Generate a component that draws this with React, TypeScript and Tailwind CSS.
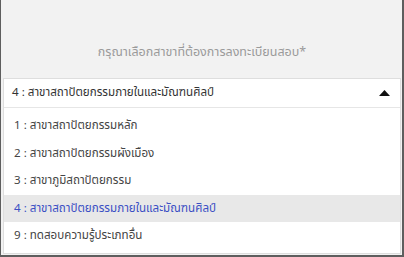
import React from 'react';

const options = [
  { id: 1, label: '1 : สาขาสถาปัตยกรรมหลัก' },
  { id: 2, label: '2 : สาขาสถาปัตยกรรมผังเมือง' },
  { id: 3, label: '3 : สาขาภูมิสถาปัตยกรรม' },
  { id: 4, label: '4 : สาขาสถาปัตยกรรมภายในและมัณฑนศิลป์' },
  { id: 9, label: '9 : ทดสอบความรู้ประเภทอื่น' },
];

const selected = 4;

export default function App() {
  return (
    <div
      className="w-[404px] h-[257px] bg-[#f2f2f2] border-l border-r-2 border-b-2 border-[#5e5e5e] pl-[2px] pr-[1px] overflow-hidden"
      style={{ fontFamily: 'Tahoma, "Noto Sans Thai", "Noto Sans", sans-serif' }}
    >
      <div className="h-[78px] flex items-center justify-center pt-[28px]">
        <p className="text-[12.5px] text-[#9a9a9a]">กรุณาเลือกสาขาที่ต้องการลงทะเบียนสอบ*</p>
      </div>

      <div className="bg-white border border-[#dedede]">
        <div className="h-[29px] flex items-center justify-between pl-[8px] pr-[10px] border-b border-[#e6e6e6]">
          <span className="text-[11.6px] text-[#333]">
            {options.find((o) => o.id === selected)?.label}
          </span>
          <svg width="11" height="6" viewBox="0 0 11 6">
            <path d="M0 6 L5.5 0 L11 6 Z" fill="#111" />
          </svg>
        </div>

        <ul className="pt-[4px] pb-[3px]">
          {options.map((o) => (
            <li
              key={o.id}
              className={
                o.id === selected
                  ? 'h-[27.6px] flex items-center pl-[10px] text-[11.6px] bg-[#e8e8e8] text-[#3b4fc4]'
                  : 'h-[27.6px] flex items-center pl-[10px] text-[11.6px] text-[#444]'
              }
            >
              {o.label}
            </li>
          ))}
        </ul>
      </div>
    </div>
  );
}
